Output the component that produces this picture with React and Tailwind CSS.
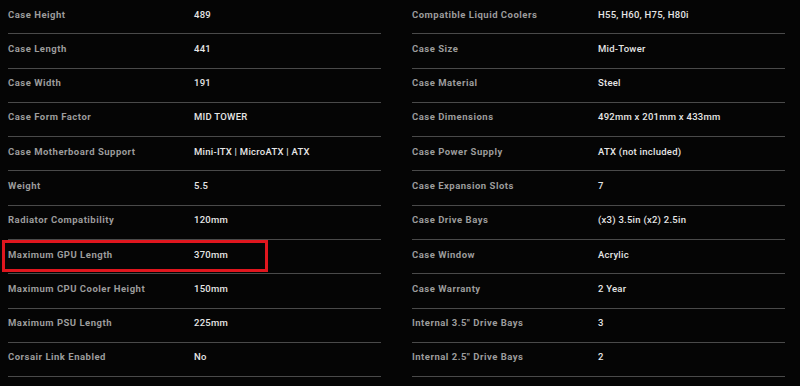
import React from 'react';

const left = [
  ['Case Height', '489'],
  ['Case Length', '441'],
  ['Case Width', '191'],
  ['Case Form Factor', 'MID TOWER'],
  ['Case Motherboard Support', 'Mini-ITX | MicroATX | ATX'],
  ['Weight', '5.5'],
  ['Radiator Compatibility', '120mm'],
  ['Maximum GPU Length', '370mm', true],
  ['Maximum CPU Cooler Height', '150mm'],
  ['Maximum PSU Length', '225mm'],
  ['Corsair Link Enabled', 'No'],
];

const right = [
  ['Compatible Liquid Coolers', 'H55, H60, H75, H80i'],
  ['Case Size', 'Mid-Tower'],
  ['Case Material', 'Steel'],
  ['Case Dimensions', '492mm x 201mm x 433mm'],
  ['Case Power Supply', 'ATX (not included)'],
  ['Case Expansion Slots', '7'],
  ['Case Drive Bays', '(x3) 3.5in (x2) 2.5in'],
  ['Case Window', 'Acrylic'],
  ['Case Warranty', '2 Year'],
  ['Internal 3.5" Drive Bays', '3'],
  ['Internal 2.5" Drive Bays', '2'],
];

function SpecRow({ label, value, marked }) {
  return (
    <div className="relative flex items-center h-[34.3px] border-b border-[#4a4a4a] pb-[4px]">
      <span className="w-[186px] text-[9.5px] font-bold tracking-[0.5px] text-[#9c9c9c]">{label}</span>
      <span className="text-[9.5px] font-medium tracking-[0.25px] text-[#e6e6e6]">{value}</span>
      {marked && (
        <div className="absolute left-[-6px] top-0 w-[266px] h-[32px] border-[3px] border-[#e0161e]"></div>
      )}
    </div>
  );
}

export default function App() {
  return (
    <div className="w-[800px] h-[386px] bg-[#050505] overflow-hidden pl-[8px] pr-[15px] grid grid-cols-2 gap-x-[31px] content-start" style={{ fontFamily: 'Roboto, "Liberation Sans", sans-serif' }}>
      <div>
        {left.map(([l, v, m]) => <SpecRow key={l} label={l} value={v} marked={m} />)}
      </div>
      <div>
        {right.map(([l, v]) => <SpecRow key={l} label={l} value={v} />)}
      </div>
    </div>
  );
}
